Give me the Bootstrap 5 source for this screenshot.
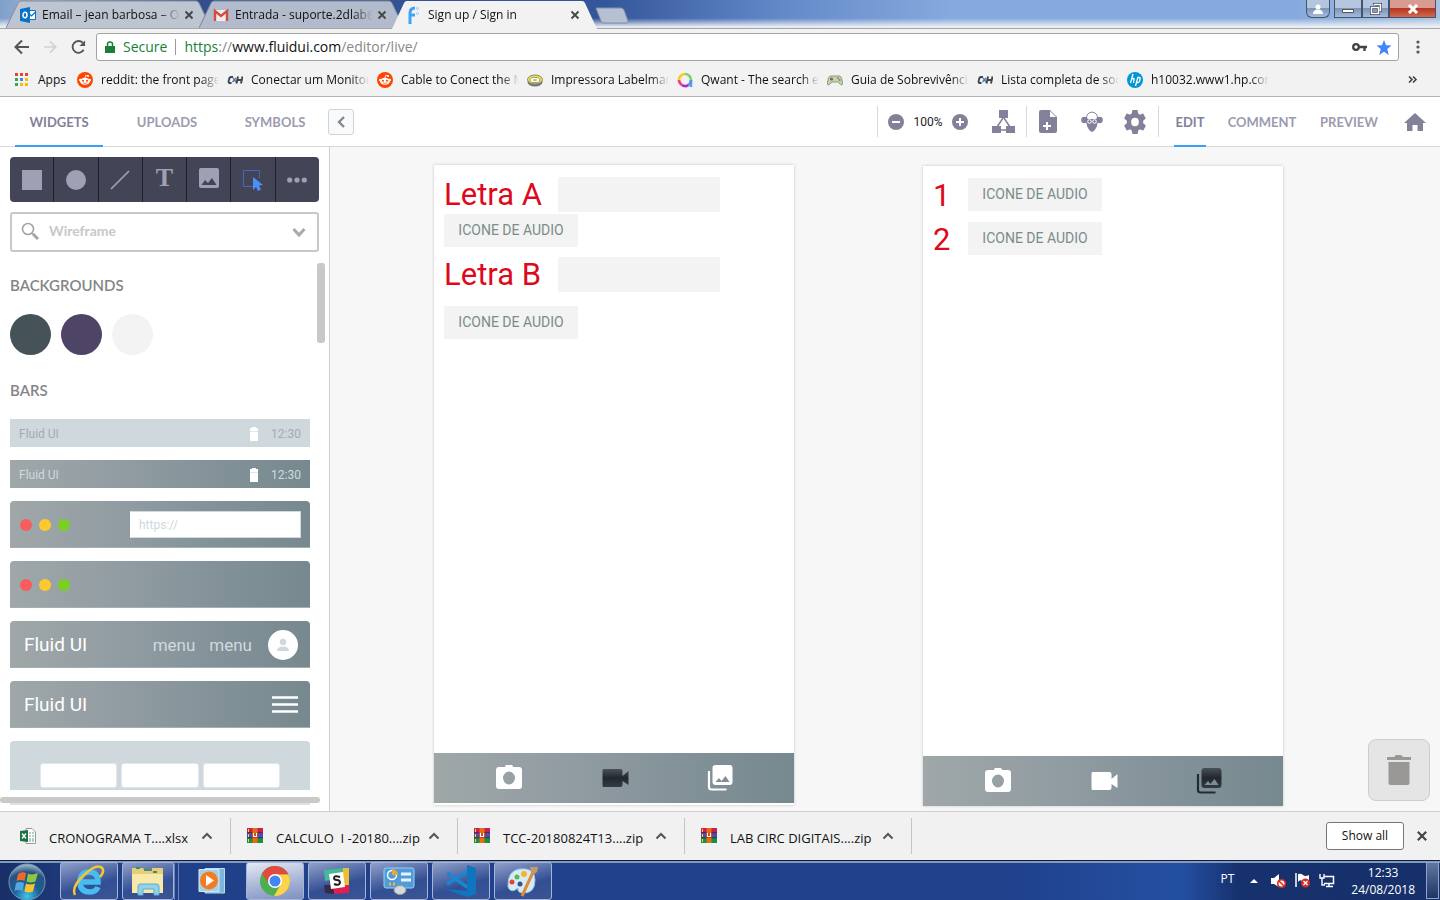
<!DOCTYPE html>
<html lang="pt">
<head>
<meta charset="utf-8">
<meta name="viewport" content="width=device-width, initial-scale=1">
<title>Sign up / Sign in</title>
<link href="https://cdn.jsdelivr.net/npm/bootstrap@5.3.0/dist/css/bootstrap.min.css" rel="stylesheet">
<style>
:root{--steel:linear-gradient(90deg,#9fa7a8 0%,#929da3 35%,#84939a 65%,#76898e 100%);--ink:#83819a;--ui:"Open Sans","Noto Sans",sans-serif}
body{font-family:var(--ui);font-size:12px;line-height:16px;color:#111;overflow:hidden;background:#f2f2f2}
a{color:inherit;text-decoration:none}
button{background:none;border:0;padding:0;color:inherit}
svg{display:block;flex:none}
/* browser window */
.titlebar{height:29px;padding-left:6px;background:linear-gradient(180deg,#fff0 65%,#f0f2f5ee 95%),linear-gradient(90deg,#7f9fcc 0,#a4b4cc 3%,#324f8b 14%,#34569a 42%,#6288c8 54%,#86aade 66%,#86aade 90%,#a9c3e2 100%);border-bottom:1px solid #a6a6a6}
.win-tab{width:205px;height:29px;margin-right:-12px;padding:0 17px 0 14px;position:relative;isolation:isolate}
.win-tab .shape{position:absolute;inset:0;z-index:-1}
.fade-text{white-space:nowrap;overflow:hidden;-webkit-mask-image:linear-gradient(90deg,#000 85%,transparent);mask-image:linear-gradient(90deg,#000 85%,transparent)}
.win-tab .fade-text{width:138px;margin:0 4px 0 6px}
.new-tab{margin:7px 0 0 10px}
.win-btns{height:18px}
.win-btns button{height:18px;border:1px solid #44546f;border-top:0;background:linear-gradient(#b4c6dd 45%,#7d95b8 50%,#a5bbd8);display:flex;align-items:center;justify-content:center}
.win-btns .shut{background:linear-gradient(#d99a90 45%,#b93522 50%,#cf6b4f)}
.navrow{height:34px;padding:4px 19px 2px 14px}
.omni{height:28px;border:1px solid #a4a4a4;border-radius:3px;background:#fff;font-size:14px;padding:0 5px 0 8px;margin:0 16px 0 10px}
.omni input{border:0;outline:0;background:none;color:transparent;padding:0;min-width:0}
.bookmarks{height:34px;border-bottom:1px solid #b3b3b3;padding-left:15px}
.bookmarks .mk{width:150px;gap:8px}
.bookmarks .fade-text{width:118px}
/* editor */
.ed-head{height:50px;border-bottom:1px solid #d8d8d8;background:#fff;font:700 13px/16px Lato,sans-serif;color:#9d9baf}
.ed-tab{height:50px;margin-bottom:-1px;border-bottom:2px solid transparent;font-weight:700;display:flex;align-items:center;justify-content:center;padding-top:2px}
.ed-tab.on{border-color:#3b9ff3;color:#83819a}
.side-tabs .ed-tab{width:88px}
.fold{width:26px;height:26px;border:1px solid #d0d3d8;border-radius:3px;background:#f9fafc;margin-left:9px}
.vr-line{width:1px;height:31px;background:#d8d8d8}
.side{width:330px;flex:none;border-right:1px solid #cfcfcf;background:#fff;position:relative;padding:10px 10px 0}
.tools{height:45px;background:#444457;border-radius:4px}
.tools button{flex:1;display:flex;align-items:center;justify-content:center}
.tools button+button{border-left:1px solid #20202e}
.pick{height:40px;border:2px solid #c8c8c8;border-radius:3px;margin-top:10px;position:relative}
.pick select{appearance:none;border:0;background:none;width:100%;height:100%;padding:0 0 2px 37px;font:700 14px/16px Lato,sans-serif;color:#c8c8c8;opacity:1}
.pick svg{position:absolute;top:8px;pointer-events:none}
.side h2{font:600 15px/20px Lato,sans-serif;color:#858585;margin:0}
.dot{width:41px;height:41px;border-radius:50%}
.wbars{width:300px;display:grid;gap:13px;font-family:Roboto,sans-serif;color:#d0dade}
.thin{height:28px;font-size:12px;padding:2px 9px 0;background:var(--steel)}
.thick{height:47px;border-radius:4px 4px 0 0;background:var(--steel);border-bottom:1px solid #a3afb3}
.light{width:12px;height:12px;border-radius:50%}
.url{width:171px;height:27px;border:1px solid #d0dade;border-left-color:#fff;background:#fff;padding:0 8px;font-size:12px;color:#cfd8dc}
.url::placeholder{color:#cfd8dc;opacity:1}
.brandtxt{font-size:19px;line-height:24px;color:#fff}
.menutxt{font-size:17px;line-height:24px}
.tabsbar{height:49px;border-radius:4px 4px 0 0;background:#cfd8dd;padding:22px 30px 0}
.tabsbar i{flex:1;height:25px;background:#fff;border:1px solid #e2e8ea;border-radius:3px}
.bar-v{position:absolute;right:4px;top:116px;width:8px;height:80px;border-radius:3px;background:#c8c8c8}
.bar-h{height:6px;border-radius:3px;background:#c9c9c9;margin:7px -1px 0 -10px}
.stage{background:#f7f7f7;padding:18px 0 0 104px;gap:129px;position:relative;overflow:hidden}
.phone{width:360px;height:640px;background:#fff;box-shadow:0 0 3px #0003;font-family:Roboto,sans-serif;flex:none}
.red{font-size:31px;line-height:35px;color:#dc0a1c}
.phone input{width:162px;height:35px;border:0;background:#f3f3f3}
.aud{width:134px;height:33px;background:#f3f3f3;color:#7b8c89;font:400 14px/16px Roboto,sans-serif;padding-bottom:1px}
.pbar{height:50px;background:var(--steel);padding:0 60px}
.bin{position:absolute;right:10px;bottom:10px;width:62px;height:62px;border:1px solid #cdcdcd;border-radius:8px;background:#e5e5e5;display:flex;align-items:center;justify-content:center}
/* downloads and taskbar */
.dl{height:49px;border-top:1px solid #cfcfcf;background:#f1f1f1;font-size:13px}
.dl .file{width:227px;height:36px;border-right:1px solid #c4c4c4;padding:0 17px 0 16px}
.dl .file:first-child{width:231px;padding-left:20px}
.dl .file a{margin-left:13px;padding-top:4px;white-space:pre}
.all{width:78px;height:28px;border:1px solid #777;border-radius:3px;background:#fff;font-size:12px}
.task{height:40px;border-top:1px solid #101c38;box-shadow:inset 0 2px #8299c0;background:linear-gradient(90deg,#182f67 0,#203d80 6%,#20408a 14%,#20418c 70%,#2450a2 82%,#17316e 86%,#16306b 100%);color:#fff}
.task .app{width:58px;height:38px;border:1px solid #a5b5d8;border-radius:3px;background:linear-gradient(165deg,#8fa0c9 0,#5269a6 40%,#334f93 60%,#3a5595 100%);display:flex;align-items:center;justify-content:center}
.task .app.live{background:linear-gradient(170deg,#e4e9f4,#a8b5d7 55%,#7e90c2)}
.task .app.bare{border-color:transparent;background:none}
.peek{width:13px;height:37px;border:1px solid #8fa2c8;background:linear-gradient(#62779f,#1e3566);margin-right:1px}
</style>
</head>
<body class="vh-100 d-flex flex-column">
<svg width="0" height="0" class="position-absolute">
<defs>
<symbol id="x" viewBox="0 0 10 10"><path d="M1.500 1.500l7 7M8.500 1.500l-7 7" stroke="#444" stroke-width="1.800" fill="none"/></symbol>
<symbol id="reddit" viewBox="0 0 16 16"><circle cx="8" cy="8" r="8" fill="#ff4500"/><ellipse cx="8" cy="9.300" rx="5" ry="3.500" fill="#fff"/><circle cx="3.300" cy="8" r="1.300" fill="#fff"/><circle cx="12.700" cy="8" r="1.300" fill="#fff"/><circle cx="11" cy="4" r="1.100" fill="#fff"/><path d="M8 6l.7-2.700 2.300.6" stroke="#fff" stroke-width=".8" fill="none"/><circle cx="6" cy="8.700" r="1" fill="#ff4500"/><circle cx="10" cy="8.700" r="1" fill="#ff4500"/><path d="M6 10.800q2 1.200 4 0" stroke="#ff4500" stroke-width=".7" fill="none"/></symbol>
<symbol id="ch" viewBox="0 0 16 16"><path d="M6 5H4Q2.500 5 2 7.500 1 11 2.500 11h2M11 4.500L9.500 11.500M15.500 4.500L14 11.500M10.500 8h4" stroke="#444" stroke-width="1.900" fill="none"/><path d="M6 6l3 4M9 6l-3.500 4" stroke="#4a78b5" stroke-width="1.300"/></symbol>
<symbol id="up" viewBox="0 0 12 8"><path d="M1.500 6.500L6 2l4.500 4.500" stroke="#555" stroke-width="2" fill="none"/></symbol>
<symbol id="rar" viewBox="0 0 16 16"><path fill="#c8204f" d="M0 0h16v5H0z"/><path fill="#4d4fb0" d="M0 5h16v5H0z"/><path fill="#17913f" d="M0 10h16v5H0z"/><path d="M0 4.700h16M0 9.800h16" stroke="#30222e" stroke-width=".7"/><path fill="#ea6a15" d="M5.500 0h5v15h-5z"/><path fill="#c03a10" d="M5 5h6v5H5z"/><path d="M6.500 5v3.500h3V5" stroke="#fff" stroke-width="1.200" fill="none"/><path d="M1.500 1v3M1.500 6v3M1.500 11v3" stroke="#ffd23b" stroke-width="1"/></symbol>
<symbol id="cam" viewBox="0 0 26 26"><path fill-rule="evenodd" d="M9 2Q9 0 10.500 0h5Q17 0 17 2h6q3 0 3 3v16q0 3-3 3H3q-3 0-3-3V5q0-3 3-3zM13 6.500a6 6.500 0 100 13 6 6.500 0 000-13z"/></symbol>
<symbol id="vid" viewBox="0 0 26 20"><path d="M1 1h17q2 0 2 2v5l6-5v14l-6-4v4q0 2-2 2H1q-1 0-1-2V3q0-2 1-2z"/></symbol>
<symbol id="gal" viewBox="0 0 26 26"><path d="M1.500 6v16q0 2.500 2.500 2.500h15" fill="none" stroke="currentColor" stroke-width="2.200"/><path fill-rule="evenodd" d="M8 0h14q3 0 3 3v14q0 3-3 3H8q-3 0-3-3V3q0-3 3-3zM8 17h14l-4-6-4 5-2.500-3z"/></symbol>
<symbol id="bat" viewBox="0 0 8 14"><path fill="#fff" d="M2 0h4v1h2v13H0V1h2z"/><path d="M0 4.500h8" stroke="#d6dfe2" stroke-width=".7"/></symbol>
<linearGradient id="dark" x2="0" y2="1"><stop stop-color="#4a5058"/><stop offset=".5" stop-color="#22272e"/><stop offset="1" stop-color="#323c46"/></linearGradient>
</defs></svg>

<header>
<div class="titlebar d-flex">
  <div class="win-tab d-flex align-items-center">
    <svg class="shape" width="205" height="28"><path d="M0 28L12 3Q13 1 15 1H190Q192 1 193 3L205 28" fill="#bdc5d1" stroke="#828da0"/></svg>
    <svg width="16" height="16" viewBox="0 0 16 16"><path fill="#0a72c6" d="M0 2l10-2v16L0 14z"/><path fill="#fff" stroke="#0a72c6" d="M9.500 3.500h6v9h-6z"/><path d="M9.500 7l2 2 4-4" stroke="#0a72c6" stroke-width="1.200" fill="none"/><ellipse cx="5" cy="8" rx="2" ry="2.700" fill="none" stroke="#fff" stroke-width="1.500"/></svg>
    <span class="fade-text">Email – jean barbosa – Ou</span>
    <button class="ms-auto" aria-label="Fechar"><svg width="10" height="10"><use href="#x"/></svg></button>
  </div>
  <div class="win-tab d-flex align-items-center">
    <svg class="shape" width="205" height="28"><path d="M0 28L12 3Q13 1 15 1H190Q192 1 193 3L205 28" fill="#b1bbcb" stroke="#7a869c"/></svg>
    <svg width="16" height="16" viewBox="0 0 16 16"><path fill="#eee" d="M1 3h14v11H1z"/><path d="M2 14V4l6 5 6-5v10" fill="none" stroke="#d54b3d" stroke-width="2.400"/></svg>
    <span class="fade-text">Entrada - suporte.2dlab@</span>
    <button class="ms-auto" aria-label="Fechar"><svg width="10" height="10"><use href="#x"/></svg></button>
  </div>
  <div class="win-tab d-flex align-items-center">
    <svg class="shape" width="205" height="29"><path d="M0 29L12 3Q13 1 15 1H190Q192 1 193 3L205 29" fill="#f2f2f2"/></svg>
    <svg width="16" height="18" viewBox="0 0 16 18"><path d="M4 18V7q0-5 5-5M4 9h5" stroke="#3da5f4" stroke-width="3" fill="none"/><g fill="none" stroke="#8ccaf8"><circle cx="11.500" cy="2.500" r="1"/><circle cx="11.500" cy="7.500" r="1"/></g></svg>
    <span class="fade-text">Sign up / Sign in</span>
    <button class="ms-auto" aria-label="Fechar"><svg width="10" height="10"><use href="#x"/></svg></button>
  </div>
  <button class="new-tab align-self-start" aria-label="Nova guia"><svg width="34" height="17"><path d="M1 1h25q2 0 3 2l4 11q0 2-2 2H9q-2 0-3-2z" fill="#b5c0d2" stroke="#7f90ae"/></svg></button>
  <div class="win-btns d-flex ms-auto me-1">
    <button class="rounded-bottom me-1" style="width:24px" aria-label="Perfil"><svg width="10" height="10"><circle cx="5" cy="3" r="2.500" fill="#fff"/><path d="M0 10Q0 5.500 5 5.500T10 10z" fill="#fff"/></svg></button>
    <button style="width:28px" aria-label="Minimizar"><svg width="12" height="10"><path d="M.5 5.500h11v3H.5z" fill="#fff" stroke="#555"/></svg></button>
    <button style="width:27px" aria-label="Restaurar"><svg width="12" height="12" fill="none"><path d="M4.500 2.500v-1h6v6h-1M1.500 4.500h7v6h-7z" stroke="#445" stroke-width="3"/><path d="M4.500 2.500v-1h6v6h-1M1.500 4.500h7v6h-7z" stroke="#fff" stroke-width="1.500"/></svg></button>
    <button class="shut" style="width:47px" aria-label="Fechar janela"><svg width="12" height="10"><path d="M2 1l8 8M10 1L2 9" stroke="#fff" stroke-width="3"/></svg></button>
  </div>
</div>
<div class="navrow d-flex align-items-center">
  <button aria-label="Voltar"><svg width="16" height="16"><path d="M15 8H2M8 1.500L1.500 8 8 14.500" fill="none" stroke="#555" stroke-width="2"/></svg></button>
  <button style="margin:0 14px" aria-label="Avançar"><svg width="13" height="16" viewBox="1 0 15 16"><path d="M1 8h13M8 1.500L14.500 8 8 14.500" fill="none" stroke="#d2d2d2" stroke-width="2"/></svg></button>
  <button aria-label="Recarregar"><svg width="15" height="16" viewBox="0 0 16 16"><path d="M13.500 11A6.300 6.300 0 1112.500 3.500" fill="none" stroke="#555" stroke-width="2"/><path d="M15 1v6H9z" fill="#555"/></svg></button>
  <div class="omni d-flex align-items-center flex-fill">
    <svg width="10" height="12"><path fill="#188038" d="M0 5h10v7H0z"/><path d="M2.500 5V3q0-2 2.500-2t2.500 2v2" stroke="#188038" stroke-width="1.500" fill="none"/></svg>
    <span class="ms-2" style="color:#188038">Secure</span>
    <span class="mx-2" style="border-left:1px solid #999;height:16px"></span>
    <a href="#"><span style="color:#188038">https</span><span style="color:#888">://</span>www.fluidui.com<span style="color:#888">/editor/live/</span></a>
    <input class="flex-fill" aria-label="Endereço">
    <svg width="15" height="10"><circle cx="4" cy="5" r="2.800" fill="none" stroke="#444" stroke-width="2.300"/><path d="M6 5h9M12.500 5v4" stroke="#444" stroke-width="2.400"/></svg>
    <svg class="ms-2" width="18" height="15" viewBox="0 0 16 16"><path fill="#4285f4" d="M8 0l2.200 5.500 5.800.4-4.500 3.700L13 16l-5-3.400L3 16l1.500-6.400L0 5.900l5.800-.4z"/></svg>
  </div>
  <button aria-label="Menu"><svg width="6" height="14" fill="#555"><circle cx="3" cy="2" r="1.600"/><circle cx="3" cy="7" r="1.600"/><circle cx="3" cy="12" r="1.600"/></svg></button>
</div>
<nav class="bookmarks d-flex align-items-center">
  <a href="#" class="d-flex align-items-center" style="width:62px"><svg class="me-2" width="15" height="14" shape-rendering="crispEdges"><g fill="#ea4335"><path d="M0 0h3v3H0zM5 0h3v3H5zM10 0h3v3h-3z"/></g><path fill="#34a853" d="M0 5h3v3H0zM0 10h3v3H0z"/><path fill="#4285f4" d="M5 5h3v3H5z"/><path fill="#fbbc05" d="M10 5h3v3h-3zM5 10h3v3H5zM10 10h3v3h-3z"/></svg>Apps</a>
  <a href="#" class="mk d-flex align-items-center"><svg width="16" height="16"><use href="#reddit"/></svg><span class="fade-text">reddit: the front page</span></a>
  <a href="#" class="mk d-flex align-items-center"><svg width="16" height="16"><use href="#ch"/></svg><span class="fade-text">Conectar um Monitor</span></a>
  <a href="#" class="mk d-flex align-items-center"><svg width="16" height="16"><use href="#reddit"/></svg><span class="fade-text">Cable to Conect the M</span></a>
  <a href="#" class="mk d-flex align-items-center"><svg width="16" height="16"><ellipse cx="8" cy="10" rx="7.500" ry="4.500" fill="#777"/><ellipse cx="8" cy="7.500" rx="7.500" ry="4.500" fill="#f1e43b" stroke="#8a8a60"/><ellipse cx="8" cy="8" rx="5" ry="2.600" fill="#fff" stroke="#999"/><ellipse cx="8" cy="8" rx="2" ry="1" fill="#c8b92c"/></svg><span class="fade-text">Impressora Labelman</span></a>
  <a href="#" class="mk d-flex align-items-center"><svg width="16" height="16" fill="none" stroke-width="2.600"><path d="M2 9A6 6 0 018 2" stroke="#fbc91b"/><path d="M8 2a6 6 0 016 6" stroke="#7bd56f"/><path d="M14 8v7" stroke="#4fa8ee"/><path d="M14 8a6 6 0 01-4 5.500" stroke="#5d8de8"/><path d="M2 8a6 6 0 003 5" stroke="#f0417b"/><path d="M5 13.200Q8 15 11 13.300" stroke="#b526c9"/></svg><span class="fade-text">Qwant - The search e</span></a>
  <a href="#" class="mk d-flex align-items-center"><svg width="16" height="16"><path d="M3 4h10q2 1 2.500 7 0 3-2 1.500L11 10H5l-2.500 2.500Q.3 14 .5 11 1 5 3 4z" fill="#c5d2ae" stroke="#8d9c7c"/><circle cx="4.500" cy="7" r="1.600" fill="#65735c"/><circle cx="11" cy="6" r="1" fill="#d66"/><circle cx="12.500" cy="8" r="1" fill="#589858"/></svg><span class="fade-text">Guia de Sobrevivênci</span></a>
  <a href="#" class="mk d-flex align-items-center"><svg width="16" height="16"><use href="#ch"/></svg><span class="fade-text">Lista completa de soc</span></a>
  <a href="#" class="mk d-flex align-items-center"><svg width="16" height="16"><circle cx="8" cy="8" r="8" fill="#0096d6"/><path d="M6 2L3.500 11M5 7q2.500-1.500 2 .5L6.500 11M11 5L8.500 14M10.500 5.500h2q1 0 .5 2l-.5 2q-.5 1-1.500 1H9.500" fill="none" stroke="#fff" stroke-width="1.300"/></svg><span class="fade-text">h10032.www1.hp.com</span></a>
  <button class="ms-auto" style="margin-right:22px" aria-label="Mais favoritos"><svg width="10" height="7"><path d="M1 .5l3 3-3 3M5 .5l3 3-3 3" fill="none" stroke="#444" stroke-width="1.600"/></svg></button>
</nav>
</header>

<div class="ed-head d-flex align-items-center">
  <div class="side-tabs d-flex" style="gap:20px;padding-left:15px">
    <button class="ed-tab on">WIDGETS</button><button class="ed-tab">UPLOADS</button><button class="ed-tab">SYMBOLS</button>
  </div>
  <button class="fold d-flex align-items-center justify-content-center" aria-label="Recolher"><svg width="8" height="12"><path d="M7 1L2 6l5 5" stroke="#888" stroke-width="2.400" fill="none"/></svg></button>
  <div class="d-flex align-items-center ms-auto">
    <span class="vr-line"></span>
    <button style="margin-left:10px" aria-label="Reduzir"><svg width="16" height="16"><circle cx="8" cy="8" r="8" fill="#83819a"/><path d="M4 8h8" stroke="#fff" stroke-width="2"/></svg></button>
    <span class="text-center" style="width:48px;font:12px/16px Roboto,sans-serif;color:#222">100%</span>
    <button aria-label="Ampliar"><svg width="16" height="16"><circle cx="8" cy="8" r="8" fill="#83819a"/><path d="M4 8h8M8 4v8" stroke="#fff" stroke-width="2"/></svg></button>
    <button style="margin-left:24px;margin-right:11px" aria-label="Ligações"><svg width="23" height="24" fill="#83819a"><path d="M7 0h9v8H7zM0 16h9v7H0zM14 16h9v7h-9z"/><path d="M11 8L5 17M12 8l6 9M9 20h5" stroke="#83819a" stroke-width="1.500"/></svg></button>
    <span class="vr-line"></span>
    <button style="margin-left:12px" aria-label="Nova página"><svg width="18" height="23"><path fill="#83819a" d="M2 0h9l7 7v14q0 2-2 2H2q-2 0-2-2V2q0-2 2-2z"/><path d="M11 1v6h6z" fill="#fff"/><path d="M4 16h8M8 12v8" stroke="#fff" stroke-width="2"/></svg></button>
    <button style="margin-left:24px" aria-label="Equipe"><svg width="22" height="22"><path d="M5.500 8Q5 2 11 1q6 1 5.500 7" fill="#fff" stroke="#83819a"/><circle cx="3.500" cy="9" r="3.300" fill="#83819a"/><circle cx="18.500" cy="9" r="3.300" fill="#83819a"/><path d="M5 8h12l-1 7q-2 5-5 6-3-1-5-6z" fill="#83819a"/><g fill="none" stroke="#fff"><circle cx="8.500" cy="10.500" r="1.800"/><circle cx="13.500" cy="10.500" r="1.800"/></g></svg></button>
    <button style="margin-left:21px;margin-right:12px" aria-label="Configurações"><svg width="22" height="24" viewBox="2 2 20 20" preserveAspectRatio="none"><path fill="#83819a" d="M19.400 13l.1-1-.1-1 2.100-1.700a.5.5 0 00.1-.6l-2-3.500a.5.5 0 00-.6-.2l-2.500 1a7 7 0 00-1.700-1L14.500 2.400A.5.5 0 0014 2h-4a.5.500 0 00-.5.400L9.100 5a7 7 0 00-1.700 1l-2.500-1a.5.5 0 00-.6.200l-2 3.500a.5.5 0 00.1.600L4.600 11l-.1 1 .1 1-2.200 1.700a.5.5 0 00-.1.600l2 3.500c.1.200.4.300.6.200l2.500-1a7 7 0 001.700 1l.4 2.600c0 .2.200.4.500.4h4c.3 0 .5-.2.500-.4l.4-2.600a7 7 0 001.700-1l2.500 1c.2.100.5 0 .6-.2l2-3.500a.5.5 0 00-.1-.6z"/><circle cx="12" cy="12" r="3.500" fill="#fff"/></svg></button>
    <span class="vr-line"></span>
    <button class="ed-tab on" style="width:32px;margin-left:15px">EDIT</button>
    <button class="ed-tab" style="width:68px;margin-left:22px">COMMENT</button>
    <button class="ed-tab" style="width:58px;margin-left:24px">PREVIEW</button>
    <a href="#" aria-label="Início" style="margin:0 14px 0 26px"><svg width="22" height="20"><path fill="#83819a" d="M11 1L0 11h3v8h5.500v-6h5v6H19v-8h3z"/></svg></a>
  </div>
</div>

<main class="d-flex flex-fill" style="min-height:0">
<aside class="side">
  <div class="tools d-flex" style="color:#a0a0b5">
    <button aria-label="Retângulo"><svg width="20" height="20"><path fill="#a0a0b5" d="M0 0h20v20H0z"/></svg></button>
    <button aria-label="Elipse"><svg width="20" height="20"><circle cx="10" cy="10" r="10" fill="#a0a0b5"/></svg></button>
    <button aria-label="Linha"><svg width="20" height="20"><path d="M1 19L19 1" stroke="#a0a0b5" stroke-width="1.700"/></svg></button>
    <button class="pb-1" aria-label="Texto" style="font:700 26px/30px 'Liberation Serif',serif">T</button>
    <button class="pb-1" aria-label="Imagem"><svg width="20" height="20"><path fill="#a0a0b5" fill-rule="evenodd" d="M2 0h16q2 0 2 2v16q0 2-2 2H2q-2 0-2-2V2q0-2 2-2zM2.500 17h15l-4.500-7-4 5-3-3z"/></svg></button>
    <button aria-label="Selecionar"><svg width="20" height="22"><path d="M10 17.500H.5V1.500h16V9" fill="none" stroke="#4268c2"/><path fill="#4a90f8" d="M10 8l10 8-4 .500 2 4-3 1.500-2-4-3 3z"/></svg></button>
    <button aria-label="Mais"><svg width="20" height="6" fill="#a0a0b5"><circle cx="2.700" cy="3" r="2.600"/><circle cx="10" cy="3" r="2.600"/><circle cx="17.300" cy="3" r="2.600"/></svg></button>
  </div>
  <div class="pick">
    <svg width="20" height="20" style="left:9px" fill="none" stroke="#a5a5a5"><circle cx="7" cy="7" r="5.500" stroke-width="1.600"/><path d="M11 11l2 2" stroke-width="1.500"/><path d="M12 12l5 5" stroke-width="3"/></svg>
    <select aria-label="Biblioteca"><option>Wireframe</option></select>
    <svg width="14" height="20" style="right:11px"><path d="M1.500 7L7 13l5.500-6" stroke="#aaa" stroke-width="3" fill="none"/></svg>
  </div>
  <div class="bar-v"></div>
  <h2 style="margin-top:23px">BACKGROUNDS</h2>
  <div class="d-flex" style="gap:10px;margin:19px 0 25px"><span class="dot" style="background:#455358"></span><span class="dot" style="background:#4e4466"></span><span class="dot" style="background:#f3f3f3"></span></div>
  <h2>BARS</h2>
  <div class="wbars" style="margin-top:19px">
    <div class="thin d-flex align-items-center" style="background:#cfd8dd;color:#a3acae"><span>Fluid UI</span><svg class="ms-auto" width="8" height="14"><use href="#bat"/></svg><span style="margin-left:13px">12:30</span></div>
    <div class="thin d-flex align-items-center"><span>Fluid UI</span><svg class="ms-auto" width="8" height="14"><use href="#bat"/></svg><span style="margin-left:13px">12:30</span></div>
    <div class="thick d-flex align-items-center" style="gap:7px;padding:1px 9px 0 10px"><span class="light" style="background:#f75d5e"></span><span class="light" style="background:#fdc92e"></span><span class="light" style="background:#7bcf22"></span><input class="url ms-auto" placeholder="https://" aria-label="URL"></div>
    <div class="thick d-flex align-items-center" style="gap:7px;padding:1px 10px 0"><span class="light" style="background:#f75d5e"></span><span class="light" style="background:#fdc92e"></span><span class="light" style="background:#7bcf22"></span></div>
    <div class="thick d-flex align-items-center" style="padding:1px 12px 0 14px"><span class="brandtxt me-auto">Fluid UI</span><span class="menutxt">menu</span><span class="menutxt" style="margin:0 16px 0 14px">menu</span><svg width="30" height="30"><circle cx="15" cy="15" r="15" fill="#fff"/><g fill="#cfd8dc"><circle cx="15" cy="12" r="3.200"/><path d="M9 21q0-4.500 6-4.500t6 4.500z"/></g></svg></div>
    <div class="thick d-flex align-items-center" style="padding:1px 12px 0 14px"><span class="brandtxt me-auto">Fluid UI</span><svg width="26" height="18"><path d="M0 1.500h26M0 8.500h26M0 15.500h26" stroke="#fff" stroke-width="2.500"/></svg></div>
    <div class="tabsbar d-flex" style="gap:4px"><i></i><i></i><i></i></div>
  </div>
  <div class="bar-h"></div>
  <div style="width:300px;height:2px;background:#dbe2e5"></div>
</aside>

<section class="stage d-flex flex-fill align-items-start">
  <article class="phone d-flex flex-column align-items-start">
    <div class="d-flex" style="padding:12px 0 2px 10px"><label class="red" for="la" style="width:114px">Letra A</label><input id="la"></div>
    <button class="aud" style="margin-left:10px">ICONE DE AUDIO</button>
    <div class="d-flex" style="padding:10px 0 14px 10px"><label class="red" for="lb" style="width:114px">Letra B</label><input id="lb"></div>
    <button class="aud" style="margin-left:10px">ICONE DE AUDIO</button>
    <div class="pbar w-100 mt-auto d-flex align-items-center justify-content-between" style="margin-bottom:2px">
      <svg width="30" height="26" fill="#fff"><use href="#cam"/></svg><svg width="27" height="20" fill="url(#dark)"><use href="#vid"/></svg><svg width="27" height="26" fill="#fff" color="#fff"><use href="#gal"/></svg>
    </div>
  </article>
  <article class="phone d-flex flex-column align-items-start" style="margin-top:1px">
    <div class="d-flex" style="padding:12px 0 0 10px"><span class="red" style="width:35px">1</span><button class="aud">ICONE DE AUDIO</button></div>
    <div class="d-flex" style="padding:9px 0 0 10px"><span class="red" style="width:35px">2</span><button class="aud">ICONE DE AUDIO</button></div>
    <div class="pbar w-100 mt-auto d-flex align-items-center justify-content-between">
      <svg width="30" height="26" fill="#fff"><use href="#cam"/></svg><svg width="27" height="20" fill="#fff"><use href="#vid"/></svg><svg width="27" height="26" fill="url(#dark)" color="#252b32"><use href="#gal"/></svg>
    </div>
  </article>
  <button class="bin" aria-label="Lixeira"><svg width="26" height="30" fill="#999896"><path d="M1 2h7l2-2h5l2 2h8v3H1zM2.500 7h21v21q0 2-2 2h-17q-2 0-2-2z"/></svg></button>
</section>
</main>

<footer>
<div class="dl d-flex align-items-center">
  <div class="file d-flex align-items-center"><svg width="16" height="16"><path d="M6 .5h6l3.500 3.500v11.500H6z" fill="#fff" stroke="#999"/><path d="M9 5h5M9 8h5M9 11h5M9 13h5" stroke="#5da37c" stroke-dasharray="2 1"/><path fill="#1d7044" d="M0 3l8-1v12l-8-1z"/><path d="M2 5.500l4 5M6 5.500l-4 5" stroke="#fff" stroke-width="1.300"/></svg><a href="#">CRONOGRAMA T....xlsx</a><button class="ms-auto" aria-label="Opções"><svg width="12" height="8"><use href="#up"/></svg></button></div>
  <div class="file d-flex align-items-center"><svg width="16" height="16"><use href="#rar"/></svg><a href="#">CALCULO  I -20180....zip</a><button class="ms-auto" aria-label="Opções"><svg width="12" height="8"><use href="#up"/></svg></button></div>
  <div class="file d-flex align-items-center"><svg width="16" height="16"><use href="#rar"/></svg><a href="#">TCC-20180824T13....zip</a><button class="ms-auto" aria-label="Opções"><svg width="12" height="8"><use href="#up"/></svg></button></div>
  <div class="file d-flex align-items-center"><svg width="16" height="16"><use href="#rar"/></svg><a href="#">LAB CIRC DIGITAIS....zip</a><button class="ms-auto" aria-label="Opções"><svg width="12" height="8"><use href="#up"/></svg></button></div>
  <button class="all ms-auto">Show all</button>
  <button style="margin:0 12px" aria-label="Fechar downloads"><svg width="12" height="12"><use href="#x"/></svg></button>
</div>
<div class="task d-flex align-items-center">
  <button style="margin:2px 14px 0 8px" aria-label="Iniciar"><svg width="38" height="38"><defs><radialGradient id="orb" cx=".5" cy=".9" r=".9"><stop stop-color="#3fc4ee"/><stop offset=".4" stop-color="#1c5f94"/><stop offset=".75" stop-color="#29527f"/><stop offset="1" stop-color="#a7bfd4"/></radialGradient></defs><circle cx="19" cy="19" r="18" fill="url(#orb)" stroke="#7698b8"/><path fill="#ee6a2c" d="M10 11q4-3 8-1l-1.500 8q-4-2-8 0z"/><path fill="#8dc63f" d="M20 10.500q4 2 10-.5l-2.500 8.500q-5 2-9 0z"/><path fill="#52a7e0" d="M8 20q4-2 8 0l-1.500 8q-4-2-8 0z"/><path fill="#fcc42c" d="M18 20.500q4 2 9 0l-2 8q-4 2-8.500 0z"/></svg></button>
  <div class="d-flex" style="gap:4px">
  <button class="app" aria-label="Internet Explorer"><svg width="34" height="34"><path d="M8 18h18Q26 8 17 8T8 18t10 10q6 0 8-5" fill="none" stroke="#46bdf0" stroke-width="5.500"/><path d="M3 31Q-1 23 12 11T30 4q3 3-2 9" fill="none" stroke="#f6c631" stroke-width="2.500"/></svg></button>
  <button class="app" style="width:52px" aria-label="Explorador"><svg width="34" height="32"><path fill="#e9cc79" d="M1 3h11l2 3h7V3h11v24H1z"/><path fill="#f9e9a8" d="M1 9h31v19H1z"/><path d="M5 3h4M13 5h4M22 7h4" stroke="#2d9d4e" stroke-width="2"/><path d="M7 30v-9q0-2 3-2h15q3 0 3 2v9h-5v-6H12v6z" fill="#91d1ea" stroke="#5badd2"/></svg></button>
  <span style="width:5px;height:38px;border-left:1px solid #6f84b5;border-right:1px solid #6f84b5;margin-left:-4px"></span>
  <button class="app bare" style="margin-right:1px" aria-label="Media Player"><svg width="28" height="26"><path fill="#7fb7db" stroke="#b9ddee" d="M7 .5h19.500V25H7z"/><path fill="#a6cfe6" stroke="#d3e9f4" d="M1 1.500h20v22H1z"/><circle cx="11" cy="12.500" r="9" fill="#f47b20"/><path fill="#fff" d="M8 7l8 5.500L8 18z"/></svg></button>
  <button class="app live" aria-label="Chrome"><svg width="32" height="32"><circle cx="16" cy="16" r="15" fill="#4caf50"/><path fill="#e04a3f" d="M3 8.500A15 15 0 0129.500 9.500H16L10 19z"/><path fill="#fdd34d" d="M29.500 9.500A15 15 0 0115 31l7-12-6-9.500z"/><circle cx="16" cy="16" r="7" fill="#fff"/><circle cx="16" cy="16" r="5.500" fill="#4285f4"/></svg></button>
  <button class="app" aria-label="Slack"><svg width="28" height="28"><path fill="#45b999" d="M1 3L22 1l1 9L2 14z"/><path fill="#e9c034" d="M20 1h6v21h-6z"/><path fill="#df2050" d="M8 19l18-1v8l-17 1z"/><path fill="#3c2947" d="M1 18h9l1 9-9-1z"/><path fill="#fff" d="M6 7l14-2 2 15-14 2z"/><path d="M17 10q-6-2-6 1 0 2 3 2t3 3q-1 3-6 1" fill="none" stroke="#222" stroke-width="2"/></svg></button>
  <button class="app" aria-label="Painel"><svg width="34" height="30"><rect x="2" y="2" width="30" height="20" rx="2" fill="#4e9cd8" stroke="#9bd0f2"/><circle cx="10" cy="9" r="4.500" fill="none" stroke="#fff" stroke-width="1.500"/><path fill="#f6a32e" d="M10 3v6h6a6 6 0 00-6-6z"/><path d="M19 8h10M19 14h10" stroke="#e7f4ff" stroke-width="3"/><path d="M7 18h6" stroke="#f9b13d" stroke-width="3" stroke-dasharray="2 2"/><ellipse cx="18" cy="24" rx="6" ry="4.500" fill="#d5d9db" stroke="#999"/></svg></button>
  <button class="app" aria-label="Visual Studio Code"><svg width="34" height="34"><path fill="#0f75bf" d="M23 1l9 3v26l-9 3-22-8 22 2z"/><path d="M23 8L3 20M3 9l20 14" stroke="#1a86d1" stroke-width="3.500"/></svg></button>
  <button class="app" aria-label="Paint"><svg width="34" height="32"><path d="M13 4q16-2 16 11 0 14-13 13-5-1-4-5-7 6-10-1Q1 6 13 4z" fill="#d5ebf7" stroke="#9bc2dc"/><circle cx="6" cy="17" r="2.500" fill="#e84332"/><circle cx="11" cy="12" r="2.500" fill="#5aba49"/><circle cx="18" cy="9" r="3" fill="#f7b429"/><circle cx="14" cy="19" r="2.500" fill="#32558c"/><path d="M28 5L16 31" stroke="#e18b3a" stroke-width="3"/><path fill="#c49a69" d="M24 2l8 0-1 5-4 3-2-2z"/></svg></button>
  </div>
  <div class="d-flex align-items-center ms-auto">
    <span class="mb-1">PT</span>
    <button style="margin-left:16px" aria-label="Ícones ocultos"><svg width="8" height="4"><path fill="#fff" d="M0 4l4-4 4 4z"/></svg></button>
    <svg style="margin-left:13px" width="15" height="14"><path fill="#fff" d="M0 4h3l5-4v13L3 10H0z"/><circle cx="10.500" cy="9.500" r="3.800" fill="#fff" stroke="#e0251b" stroke-width="1.600"/><path d="M8 7l5 5" stroke="#e0251b" stroke-width="1.600"/></svg>
    <svg style="margin-left:9px" width="15" height="15"><path d="M1 0v14" stroke="#fff" stroke-width="1.500"/><path fill="#fff" d="M3 1q3-1 5 1t6 0v7q-5 1-7-1T3 9z"/><circle cx="10.500" cy="10" r="4.500" fill="#dc2a24"/><path d="M8.500 8l4 4M12.500 8l-4 4" stroke="#fff" stroke-width="1.300"/></svg>
    <svg style="margin-left:9px" width="16" height="15" fill="none" stroke="#fff"><path d="M5 3.500h9.500v7H5M7 13.500h7M10 11v2" stroke-width="1.500"/><path d="M1 1v4h4V1M3 5v7h3" stroke-width="1.400"/></svg>
    <div class="text-center" style="margin:0 11px 0 16px;white-space:nowrap;line-height:17px">12:33<br>24/08/2018</div>
    <button class="peek" aria-label="Mostrar área de trabalho"></button>
  </div>
</div>
</footer>
<script src="https://cdn.jsdelivr.net/npm/bootstrap@5.3.0/dist/js/bootstrap.bundle.min.js"></script>
</body>
</html>
